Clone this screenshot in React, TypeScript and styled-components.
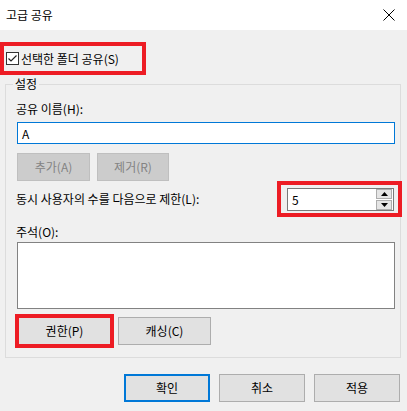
import React from "react";
import styled, { createGlobalStyle } from "styled-components";

const Global = createGlobalStyle`
  html, body { margin: 0; padding: 0; background: #f0f0f0; }
  body {
    font-family: "Noto Sans CJK KR", "Noto Sans", "Liberation Sans", sans-serif;
    font-size: 12px;
    color: #000;
  }
  * { box-sizing: border-box; }
`;

const Window = styled.div`
  width: 407px;
  height: 411px;
  background: #f0f0f0;
  display: flex;
  flex-direction: column;
  overflow: hidden;
`;

const TitleBar = styled.div`
  height: 30px;
  background: #fff;
  display: flex;
  align-items: center;
  justify-content: space-between;
  padding: 0 12px 0 6px;
  flex-shrink: 0;
`;

const Title = styled.span`
  font-size: 12px;
  line-height: 16px;
  color: #000;
`;

const Highlight = styled.div<{ $w: number; $h: number }>`
  width: ${(p) => p.$w}px;
  height: ${(p) => p.$h}px;
  border: 4px solid #ed1c24;
  display: flex;
  align-items: center;
  flex-shrink: 0;
  position: relative;
`;

const CheckHighlight = styled(Highlight)`
  margin-top: 12px;
  padding-left: 2px;
  gap: 2px;
`;

const CheckBox = styled.span`
  width: 13px;
  height: 13px;
  border: 1px solid #333;
  background: #fff;
  display: flex;
  align-items: center;
  justify-content: center;
`;

const Text = styled.span`
  font-size: 12px;
  line-height: 16px;
  white-space: nowrap;
`;

const Group = styled.div`
  margin: 9px 6px 0 5px;
  border: 1px solid #dcdcdc;
  display: flex;
  flex-direction: column;
  align-items: flex-start;
  padding-bottom: 9px;
`;

const Legend = styled.span`
  margin: -9px 0 0 7px;
  padding: 0 2px;
  background: #f0f0f0;
  font-size: 12px;
  line-height: 16px;
`;

const Label = styled.div<{ $mt: number }>`
  margin: ${(p) => p.$mt}px 0 0 10px;
  font-size: 12px;
  line-height: 16px;
  white-space: nowrap;
`;

const TextInput = styled.div`
  margin: 5px 0 0 11px;
  width: 378px;
  height: 22px;
  border: 1px solid #0078d7;
  background: #fff;
  display: flex;
  align-items: center;
  padding-left: 4px;
  font-size: 12px;
`;

const Row = styled.div<{ $mt: number; $gap: number; $ml: number }>`
  margin: ${(p) => p.$mt}px 0 0 ${(p) => p.$ml}px;
  display: flex;
  align-items: center;
  gap: ${(p) => p.$gap}px;
`;

const Button = styled.div<{ $w: number; $h?: number; $disabled?: boolean; $default?: boolean }>`
  width: ${(p) => p.$w}px;
  height: ${(p) => p.$h ?? 28}px;
  display: flex;
  align-items: center;
  justify-content: center;
  font-size: 12px;
  line-height: 16px;
  white-space: nowrap;
  background: ${(p) => (p.$disabled ? "#cccccc" : "#e1e1e1")};
  color: ${(p) => (p.$disabled ? "#838383" : "#000")};
  border: ${(p) =>
    p.$default ? "2px solid #0078d7" : p.$disabled ? "1px solid #bfbfbf" : "1px solid #adadad"};
  flex-shrink: 0;
`;

const InnerButton = styled.div`
  flex: 1;
  align-self: stretch;
  background: #e1e1e1;
  display: flex;
  align-items: center;
  justify-content: center;
  font-size: 12px;
  line-height: 16px;
`;

const LimitRow = styled.div`
  align-self: stretch;
  margin: 0 -2px 0 10px;
  display: flex;
  align-items: center;
  justify-content: space-between;
`;

const SpinHighlight = styled(Highlight)`
  padding: 3px 4px 2px 6px;
`;

const Spinner = styled.div`
  width: 107px;
  height: 23px;
  border: 1px solid #7a7a7a;
  background: #fff;
  display: flex;
  align-items: stretch;
`;

const SpinValue = styled.div`
  flex: 1;
  display: flex;
  align-items: center;
  padding-left: 4px;
  font-size: 12px;
`;

const SpinButtons = styled.div`
  width: 17px;
  display: flex;
  flex-direction: column;
  gap: 1px;
  padding: 0 1px 0 0;
  justify-content: center;
`;

const SpinButton = styled.div`
  height: 10px;
  background: #e5e5e5;
  border: 1px solid #adadad;
  display: flex;
  align-items: center;
  justify-content: center;
`;

const TextArea = styled.div`
  margin: 2px 0 0 11px;
  width: 378px;
  height: 67px;
  border: 1px solid #828282;
  background: #fff;
`;

const Footer = styled.div`
  margin-top: 16px;
  display: flex;
  justify-content: flex-end;
  padding-right: 7px;
  gap: 9px;
`;

const Close = () => (
  <svg width="12" height="12" viewBox="0 0 12 12">
    <path d="M0.5 0.5 L11.5 11.5 M11.5 0.5 L0.5 11.5" stroke="#000" strokeWidth="1" fill="none" />
  </svg>
);

const Check = () => (
  <svg width="11" height="11" viewBox="0 0 11 11">
    <path d="M1.5 5.5 L4 8 L9.5 2.5" stroke="#222" strokeWidth="1.2" fill="none" />
  </svg>
);

const Tri = ({ up }: { up: boolean }) => (
  <svg width="7" height="4" viewBox="0 0 7 4">
    <path d={up ? "M0 4 L3.5 0 L7 4 Z" : "M0 0 L7 0 L3.5 4 Z"} fill="#000" />
  </svg>
);

export default function App() {
  return (
    <>
      <Global />
      <Window>
        <TitleBar>
          <Title>고급 공유</Title>
          <Close />
        </TitleBar>
        <CheckHighlight $w={146} $h={33}>
          <CheckBox>
            <Check />
          </CheckBox>
          <Text>선택한 폴더 공유(S)</Text>
        </CheckHighlight>
        <Group>
          <Legend>설정</Legend>
          <Label $mt={9}>공유 이름(H):</Label>
          <TextInput>A</TextInput>
          <Row $mt={9} $gap={7} $ml={11}>
            <Button $w={73} $disabled>추가(A)</Button>
            <Button $w={72} $disabled>제거(R)</Button>
          </Row>
          <LimitRow>
            <Text>동시 사용자의 수를 다음으로 제한(L):</Text>
            <SpinHighlight $w={125} $h={36}>
              <Spinner>
                <SpinValue>5</SpinValue>
                <SpinButtons>
                  <SpinButton>
                    <Tri up />
                  </SpinButton>
                  <SpinButton>
                    <Tri up={false} />
                  </SpinButton>
                </SpinButtons>
              </Spinner>
            </SpinHighlight>
          </LimitRow>
          <Label $mt={7}>주석(O):</Label>
          <TextArea />
          <Row $mt={5} $gap={4} $ml={9}>
            <Highlight $w={99} $h={34}>
              <InnerButton>권한(P)</InnerButton>
            </Highlight>
            <Button $w={93}>캐싱(C)</Button>
          </Row>
        </Group>
        <Footer>
          <Button $w={86} $default>확인</Button>
          <Button $w={86}>취소</Button>
          <Button $w={86}>적용</Button>
        </Footer>
      </Window>
    </>
  );
}
